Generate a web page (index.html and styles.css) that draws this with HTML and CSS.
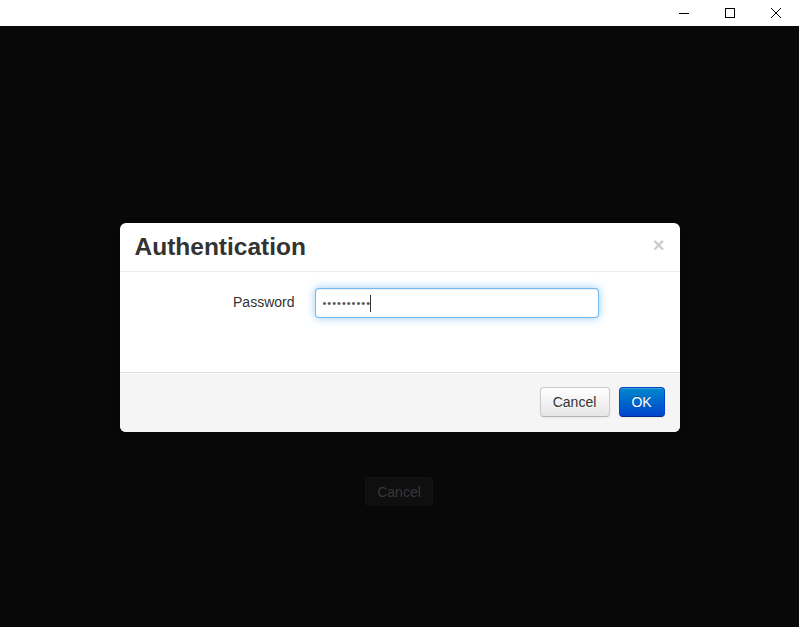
FILE: index.html
```html
<!DOCTYPE html>
<html lang="en">
<head>
  <meta charset="UTF-8">
  <title>Authentication</title>
  <link rel="stylesheet" href="styles.css">
</head>
<body>

  <div class="titlebar">
    <div class="win-btn">
      <svg width="12" height="12" viewBox="0 0 12 12"><path d="M1 6.5h10" stroke="#000" stroke-width="1"/></svg>
    </div>
    <div class="win-btn">
      <svg width="12" height="12" viewBox="0 0 12 12"><rect x="1.5" y="1.5" width="9" height="9" fill="none" stroke="#000" stroke-width="1"/></svg>
    </div>
    <div class="win-btn">
      <svg width="12" height="12" viewBox="0 0 12 12"><path d="M1 1l10 10M11 1L1 11" stroke="#000" stroke-width="1"/></svg>
    </div>
  </div>

  <div class="stage">
    <div class="modal">
      <div class="modal-header">
        <span class="close">&times;</span>
        <h3>Authentication</h3>
      </div>
      <div class="modal-body">
        <div class="control-group">
          <label class="control-label" for="password">Password</label>
          <div class="controls">
            <div class="input focused" id="password"><span class="dots">••••••••••</span><span class="caret"></span></div>
          </div>
        </div>
      </div>
      <div class="modal-footer">
        <button type="button" class="btn btn-cancel">Cancel</button>
        <button type="button" class="btn btn-primary">OK</button>
      </div>
    </div>

    <button type="button" class="btn-behind">Cancel</button>
  </div>

</body>
</html>
```

FILE: styles.css
```css
html, body {
  margin: 0;
  padding: 0;
  height: 100%;
}

body {
  font-family: "Liberation Sans", Arial, Helvetica, sans-serif;
  font-size: 14px;
  color: #333;
  background-color: #080808;
  display: flex;
  flex-direction: column;
  overflow: hidden;
}

.titlebar {
  height: 26px;
  background-color: #fff;
  display: flex;
  justify-content: flex-end;
  flex-shrink: 0;
}

.win-btn {
  width: 46px;
  height: 26px;
  display: flex;
  align-items: center;
  justify-content: center;
}

.win-btn svg {
  display: block;
  margin-top: -1px;
}

.stage {
  flex: 1;
  display: flex;
  flex-direction: column;
  align-items: center;
  padding-top: 197px;
}

.modal {
  width: 560px;
  background-color: #fff;
  border-radius: 6px;
  box-shadow: 0 3px 7px rgba(0, 0, 0, 0.3);
}

.modal-header {
  padding: 9px 15px;
  border-bottom: 1px solid #eee;
}

.modal-header h3 {
  margin: 0;
  font-size: 24.5px;
  line-height: 30px;
  font-weight: bold;
  color: #333;
}

.close {
  float: right;
  margin-top: 3px;
  font-size: 20px;
  font-weight: bold;
  line-height: 20px;
  color: #000;
  opacity: 0.2;
}

.modal-body {
  padding: 16px 15px 15px;
  height: 69px;
}

.control-group {
  display: flex;
}

.control-label {
  width: 160px;
  padding-top: 4px;
  text-align: right;
  color: #333;
  line-height: 20px;
}

.controls {
  margin-left: 20px;
}

.input {
  width: 270px;
  height: 20px;
  padding: 4px 6px;
  border: 1px solid #ccc;
  border-radius: 4px;
  background-color: #fff;
  display: flex;
  align-items: center;
}

.input.focused {
  border-color: rgba(82, 168, 236, 0.8);
  box-shadow: inset 0 1px 1px rgba(0, 0, 0, 0.075), 0 0 8px rgba(82, 168, 236, 0.6);
}

.dots {
  font-size: 11px;
  letter-spacing: 1px;
  color: #555;
  margin-left: 1px;
}

.caret {
  width: 1px;
  height: 17px;
  background-color: #333;
  margin-left: -1px;
}

.modal-footer {
  padding: 14px 15px 15px;
  background-color: #f5f5f5;
  border-top: 1px solid #ddd;
  border-radius: 0 0 6px 6px;
  box-shadow: inset 0 1px 0 #fff;
  display: flex;
  justify-content: flex-end;
  gap: 9px;
}

.btn {
  font-family: inherit;
  font-size: 14px;
  line-height: 20px;
  padding: 4px 0;
  height: 30px;
  text-align: center;
  color: #333;
  background-image: linear-gradient(to bottom, #fff, #e6e6e6);
  border: 1px solid #ccc;
  border-bottom-color: #b3b3b3;
  border-radius: 4px;
  box-shadow: inset 0 1px 0 rgba(255, 255, 255, 0.2), 0 1px 2px rgba(0, 0, 0, 0.05);
  text-shadow: 0 1px 1px rgba(255, 255, 255, 0.75);
}

.btn-cancel {
  width: 70px;
}

.btn-primary {
  width: 46px;
  color: #fff;
  background-image: linear-gradient(to bottom, #08c, #04c);
  border-color: #04c #04c #002a80;
  text-shadow: 0 -1px 0 rgba(0, 0, 0, 0.25);
}

.btn-behind {
  margin-top: 45px;
  margin-left: -1px;
  font-family: inherit;
  font-size: 14px;
  line-height: 20px;
  padding: 4px 0;
  height: 29px;
  width: 68px;
  color: #383838;
  background-color: #0f0f0f;
  border: 1px solid #121212;
  border-radius: 4px;
}
```
